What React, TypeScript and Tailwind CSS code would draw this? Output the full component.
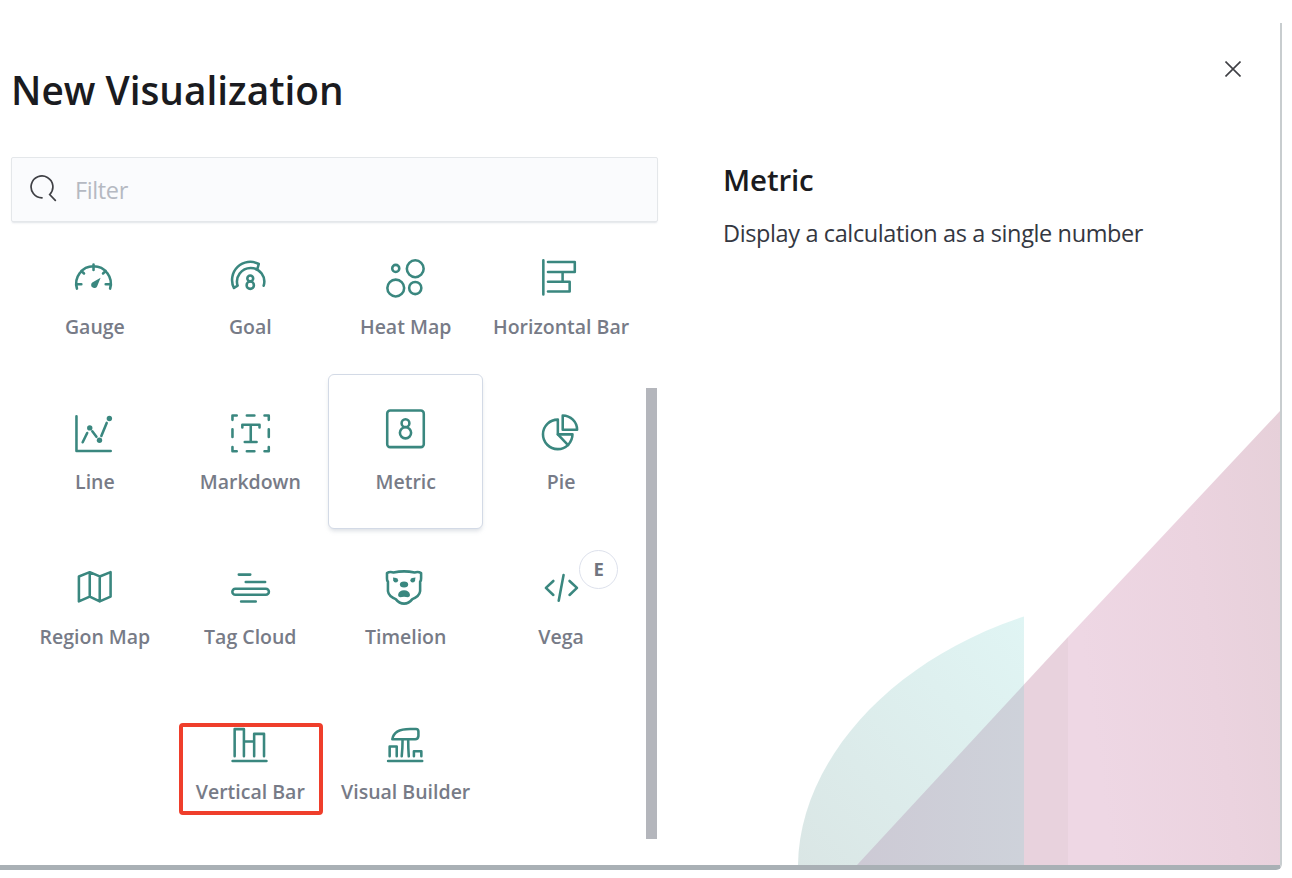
import type { ReactNode } from "react";

type VisType = {
  name: string;
  icon: ReactNode;
  selected?: boolean;
  experimental?: boolean;
  highlighted?: boolean;
};

const solid = { fill: "currentColor", stroke: "none" };

const gauge = (
  <>
    <path d="M1.6 24.3A14.2 14.2 0 1 1 28.8 24.3M15.2 4.5V9M1.5 20.7H5.2M25.2 20.7H29M5.2 9.7L7.4 11.9M25.2 9.7L23 11.9" />
    <path d="M21 15.4L18.2 22.3A2.6 2.6 0 1 1 14.2 19.2Z" {...solid} />
  </>
);

const goal = (
  <>
    <path d="M5.4 21.8L2.4 23.8A14.9 14.9 0 0 1 22.8 4.1L21.6 8.3M5.4 21.8A11.2 11.2 0 1 1 26.8 21.9" />
    <circle cx="15.8" cy="15.9" r="2.4" />
    <circle cx="15.8" cy="21.5" r="3" />
  </>
);

const heatMap = (
  <>
    <circle cx="8" cy="7.7" r="2.9" />
    <circle cx="24" cy="8" r="6.9" />
    <circle cx="8" cy="23.8" r="6.9" />
    <circle cx="24" cy="23.8" r="5" />
  </>
);

const horizontalBar = (
  <path d="M1.1 1V29.1M4.9 2.5H26.9V10.6H4.9M4.9 18.6H22.7V26.6H4.9M16.9 10.6V18.6" />
);

const line = (
  <>
    <path d="M1.2 1.9V30.4H29.3M6.3 23.2L10 15.6M14.2 14.2L17.6 18.7M21.6 18L26 7.3" />
    <circle cx="12.1" cy="11.4" r="2.2" {...solid} />
    <circle cx="20.1" cy="21.5" r="2.2" {...solid} />
    <circle cx="28.2" cy="3.7" r="2.2" {...solid} />
  </>
);

const markdown = (
  <>
    <path d="M1.2 4.8V1.3H4.7M27.5 1.3H31V4.8M31 27.1V30.6H27.5M4.7 30.6H1.2V27.1M13 1.3H19.2M13 30.6H19.2M1.2 12.6V18.8M31 12.6V18.8" />
    <path d="M9.3 11V8.8H23.4V11M16.2 8.8V23M11.3 23H21" />
  </>
);

const metric = (
  <>
    <rect x="1" y="1.3" width="30" height="30" rx="2.4" />
    <circle cx="16" cy="11.6" r="3.2" />
    <circle cx="16" cy="19.5" r="4.6" />
  </>
);

const pie = (
  <>
    <path d="M13 4.6A12.1 12.1 0 1 0 25 16.7H13Z" />
    <path d="M13 16.7L21.4 25.5" />
    <path d="M17 1.2V13H28.8A11.8 11.8 0 0 0 17 1.2Z" />
  </>
);

const regionMap = (
  <path d="M3.2 6.1L12.1 2.6L20.3 6.1L29.2 2.6V22.6L20.3 26.6L12.1 22.6L3.2 26.6ZM12.1 2.6V22.6M20.3 6.1V26.6" />
);

const tagCloud = (
  <>
    <path d="M6.4 4.6H15.8M12.1 10.7H28M8.3 26.7H20.3" />
    <rect x="1.1" y="16.2" width="30" height="4.9" rx="2.45" />
  </>
);

const timelion = (
  <>
    <path d="M6.2 2.9Q14.8 1 23.4 2.9Q26.6 1.9 28.8 3.4V7.6Q28.9 9.2 28 10.5V18.2Q27.4 22.6 21.6 24.7Q18.8 28.4 14.8 28.4Q10.8 28.4 8 24.7Q2.2 22.6 1.6 18.2V10.5Q0.7 9.2 0.8 7.6V3.4Q3 1.9 6.2 2.9Z" />
    <circle cx="8" cy="9.2" r="1.9" {...solid} />
    <path d="M5.7 7L8.5 7.3L6.2 9.8Z" {...solid} />
    <circle cx="21.9" cy="9.2" r="1.9" {...solid} />
    <path d="M24.2 7L21.4 7.3L23.7 9.8Z" {...solid} />
    <ellipse cx="14.8" cy="12.7" rx="3.4" ry="2.5" {...solid} />
    <path d="M9.9 21.3C10.2 18.8 12.2 17.5 14.8 17.5S19.4 18.8 19.7 21.3Q19.7 22.9 18 23.1Q14.8 22.6 11.6 23.1Q9.9 22.9 9.9 21.3Z" {...solid} />
  </>
);

const vega = <path d="M9.3 9.8L3.2 15.5L9.3 21.3M17.7 4.9L13.7 26M22.6 9.8L28.7 15.5L22.6 21.3" />;

const verticalBar = (
  <path d="M1.3 30.3H29.1M3 26.5V4.2H10.6V26.5M19 26.5V8.1H27.1V26.5M10.6 14.3H19" />
);

const visualBuilder = (
  <path d="M1.7 30.3H29.7M5.2 12.5Q6.3 4.1 19.8 4.1H24.6Q26.6 4.1 26.6 6.2V9.8Q26.2 12.5 24 12.5ZM13.6 12.5Q13.6 20 12.9 26.5M18.2 12.5Q18.2 20 18.7 26.5M3 26.5V18.4H8.8V26.5M22.9 26.5V22.4H29V26.5" />
);

const visTypes: VisType[] = [
  { name: "Gauge", icon: gauge },
  { name: "Goal", icon: goal },
  { name: "Heat Map", icon: heatMap },
  { name: "Horizontal Bar", icon: horizontalBar },
  { name: "Line", icon: line },
  { name: "Markdown", icon: markdown },
  { name: "Metric", icon: metric, selected: true },
  { name: "Pie", icon: pie },
  { name: "Region Map", icon: regionMap },
  { name: "Tag Cloud", icon: tagCloud },
  { name: "Timelion", icon: timelion },
  { name: "Vega", icon: vega, experimental: true },
  { name: "Vertical Bar", icon: verticalBar, highlighted: true },
  { name: "Visual Builder", icon: visualBuilder },
];

function VisTile({ name, icon, selected, experimental, highlighted }: VisType) {
  return (
    <button
      className={
        selected
          ? "relative flex h-[155.3px] w-[155.4px] flex-col items-center rounded-md border-[1.5px] border-[#d3dae6] bg-white pt-[34px] shadow-[0_3px_4px_-1px_rgba(152,162,179,0.35)]"
          : "relative flex h-[155.3px] w-[155.4px] flex-col items-center pt-[40px]"
      }
    >
      <svg
        viewBox="0 0 32 32"
        className="h-[39px] w-[39px] shrink-0 overflow-visible text-[#3a877f]"
        fill="none"
        stroke="currentColor"
        strokeWidth="2.1"
        strokeLinecap="round"
        strokeLinejoin="round"
      >
        {icon}
      </svg>
      <span
        className={
          selected
            ? "mt-[20px] text-[19.5px] leading-7 font-semibold whitespace-nowrap text-[#777b87]"
            : "mt-[15px] text-[19.5px] leading-7 font-semibold whitespace-nowrap text-[#777b87]"
        }
      >
        {name}
      </span>
      {experimental && (
        <span className="absolute top-[20.5px] right-[20.5px] flex h-[39px] w-[39px] items-center justify-center rounded-full border-[1.5px] border-[#dde1ec] bg-white text-[18.5px] font-bold text-[#71757f]">
          E
        </span>
      )}
      {highlighted && (
        <span className="absolute top-[38.5px] left-[6.5px] h-[92px] w-[144px] rounded-[4px] border-4 border-[#ef3e2b]" />
      )}
    </button>
  );
}

function Backdrop() {
  return (
    <svg viewBox="0 0 490 460" className="pointer-events-none absolute right-0 bottom-0 h-[460px] w-[490px]">
      <defs>
        <linearGradient id="leaf" x1="1" y1="0" x2="0" y2="1">
          <stop offset="0" stopColor="#e0f5f4" />
          <stop offset="1" stopColor="#dae6e5" />
        </linearGradient>
        <linearGradient id="wedge" x1="0" y1="0.3" x2="1" y2="0">
          <stop offset="0" stopColor="#eed7e4" />
          <stop offset="0.55" stopColor="#ebd3df" />
          <stop offset="1" stopColor="#e6d0d9" />
        </linearGradient>
        <linearGradient id="overlap" x1="0" y1="0" x2="1" y2="0">
          <stop offset="0" stopColor="#cdcad5" />
          <stop offset="1" stopColor="#ced2da" />
        </linearGradient>
      </defs>
      <path d="M8 460C9 362 93 258 234 211.5V460Z" fill="url(#leaf)" />
      <path d="M278 232L490 6V460H278Z" fill="url(#wedge)" />
      <path d="M234 279.5L278 232V460H234Z" fill="#e8d2dd" />
      <path d="M67 460L234 279.5V460Z" fill="url(#overlap)" />
    </svg>
  );
}

export default function App() {
  return (
    <div className="h-[878px] w-[1292px] overflow-hidden bg-white pt-[23px] font-['Open_Sans','Noto_Sans',sans-serif]">
      <div className="h-[847px] w-[1282px] rounded-br-md border-r-2 border-b-[5px] border-r-[#c8cdcf] border-b-[#a9b0b5]">
        <div className="relative flex h-[842px] w-[1280px]">
          <Backdrop />
          <section className="relative w-[658px] pl-[11px]">
            <h1 className="mt-[39px] h-[95px] text-[38.8px] leading-[56px] font-semibold whitespace-nowrap text-[#1a1b20]">
              New Visualization
            </h1>
            <label className="flex h-[65px] w-[647px] items-center rounded-[2px] border-[1.5px] border-[#e4e7ea] bg-[#fafbfd] pl-[17px] shadow-[0_2px_2px_-1px_rgba(152,162,179,0.3)]">
              <svg
                viewBox="0 0 28 28"
                className="mb-[3px] h-7 w-7 shrink-0 text-[#3f4045]"
                fill="none"
                stroke="currentColor"
                strokeWidth="1.7"
                strokeLinecap="round"
              >
                <path d="M13 23.8A10.9 10.9 0 1 1 20.7 20.6L26.3 26.4" />
              </svg>
              <span className="mt-[2px] ml-[18px] text-[23.5px] tracking-[-0.38px] text-[#b5b9c2]">Filter</span>
            </label>
            <div className="flex">
              <div className="-mt-[3.5px] ml-[5.5px] flex w-[623px] shrink-0 flex-wrap justify-center">
                {visTypes.map((type) => (
                  <VisTile key={type.name} {...type} />
                ))}
              </div>
              <div className="mt-[166px] ml-[6.5px] h-[451px] w-[11px] shrink-0 bg-[#b4b6bc]" />
            </div>
          </section>
          <aside className="relative flex-1 pl-[65px]">
            <h2 className="mt-[137px] text-[29.5px] leading-10 font-semibold tracking-[-0.15px] text-[#1a1b20]">
              Metric
            </h2>
            <p className="mt-[17px] text-[23.5px] leading-8 tracking-[-0.38px] whitespace-nowrap text-[#343741]">
              Display a calculation as a single number
            </p>
          </aside>
          <button aria-label="Close" className="absolute top-[38px] right-[39px] text-[#3f4045]">
            <svg viewBox="0 0 16 16" className="h-4 w-4" fill="none" stroke="currentColor" strokeWidth="1.6">
              <path d="M0.5 0.5L15.5 15.5M15.5 0.5L0.5 15.5" />
            </svg>
          </button>
        </div>
      </div>
    </div>
  );
}
